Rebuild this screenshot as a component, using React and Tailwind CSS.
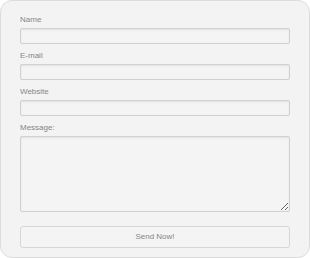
import React from "react";

function Field({ label }) {
  return (
    <div className="mb-[5px]">
      <div className="text-[8px] leading-[13px] text-[#858585] mb-[2px]">{label}</div>
      <input
        type="text"
        className="block w-full h-[16px] border border-[#d0d0d0] bg-[#f4f4f4] rounded-[2px] shadow-[inset_0_1px_2px_rgba(0,0,0,0.08)] outline-none"
      />
    </div>
  );
}

export default function App() {
  return (
    <div className="w-[310px] h-[258px] bg-white" style={{ fontFamily: '"Liberation Sans", Arial, sans-serif' }}>
      <div className="w-[310px] h-[258px] box-border border border-[#dcdcdc] rounded-[12px] bg-[#f3f3f3] px-[19px] pt-[12px]">
        <Field label="Name" />
        <Field label="E-mail" />
        <Field label="Website" />
        <div>
          <div className="text-[8px] leading-[13px] text-[#858585] mb-[2px]">Message:</div>
          <textarea className="block w-full h-[76px] border border-[#d0d0d0] bg-[#f4f4f4] rounded-[2px] shadow-[inset_0_1px_2px_rgba(0,0,0,0.08)] outline-none resize" />
        </div>
        <button className="mt-[14px] block w-full h-[22px] border border-[#d6d6d6] bg-[#f4f4f4] rounded-[3px] text-[8px] text-[#858585] leading-none">
          Send Now!
        </button>
      </div>
    </div>
  );
}
